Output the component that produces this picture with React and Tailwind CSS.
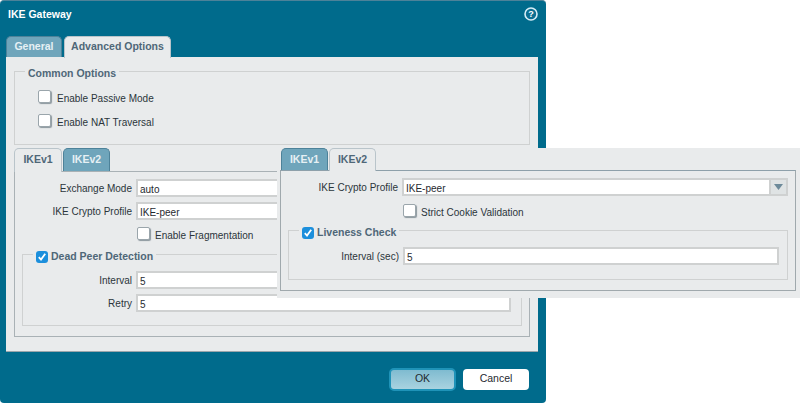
import React from 'react';

const font = { fontFamily: '"Liberation Sans", Arial, sans-serif' };

function Tab({ label, active, width }) {
  return (
    <div
      className={`flex items-center justify-center rounded-t-[5px] border border-b-0 text-[10.5px] font-bold ${width} ${
        active
          ? 'relative z-10 -mb-px border-[#b9c4ca] bg-[#e9ebec] pb-px text-[#4f6778]'
          : 'border-[#4d8299] bg-[#6fa5bb] text-[#e6f0f4]'
      }`}
    >
      {label}
    </div>
  );
}

function CheckBox({ checked }) {
  if (checked) {
    return (
      <span className="flex h-[12px] w-[12px] shrink-0 items-center justify-center rounded-[3px] bg-[#1c8fdc]">
        <svg width="10" height="10" viewBox="0 0 10 10">
          <path d="M1.8 5.2 L4 7.6 L8.2 1.8" fill="none" stroke="#fff" strokeWidth="1.8" />
        </svg>
      </span>
    );
  }
  return (
    <span className="h-[13px] w-[13px] shrink-0 rounded-[2px] border border-[#9aa5ab] bg-white shadow-[1px_1px_1px_#8b979e]" />
  );
}

function CheckRow({ label, gap, className = '' }) {
  return (
    <label className={`flex h-[13px] items-center text-[10px] text-[#2b353b] ${gap} ${className}`}>
      <CheckBox />
      <span className="pt-[3px]">{label}</span>
    </label>
  );
}

function Field({ label, value, labelWidth, inputWidth, arrow }) {
  return (
    <div className="flex items-center">
      <span className={`shrink-0 pr-[4px] pt-[1px] text-right text-[10px] text-[#2b353b] ${labelWidth}`}>{label}</span>
      <div className={`flex h-[18px] items-center border-2 border-[#cfd1d1] bg-white pl-[2px] text-[10px] text-[#1f2a30] ${inputWidth}`}>
        <span className="flex-1 pt-[2px]">{value}</span>
        {arrow && (
          <span className="-my-[2px] -mr-[2px] flex h-[18px] w-[19px] items-center justify-center border-2 border-[#cfd1d1] bg-[#dfe3e4]">
            <svg width="9" height="6" viewBox="0 0 9 6">
              <path d="M0 0 H9 L4.5 6 Z" fill="#6d8a9a" />
            </svg>
          </span>
        )}
      </div>
    </div>
  );
}

function Legend({ children }) {
  return <div className="absolute -top-[5px] left-[10px] flex h-[13px] items-center gap-[3px] bg-[#e9ebec] px-[3px] text-[10.5px] font-bold text-[#4f6778]">{children}</div>;
}

export default function App() {
  return (
    <div className="relative h-[404px] w-[800px] overflow-hidden bg-white" style={font}>
      <div className="flex h-[403px] w-[546px] flex-col rounded-[4px] border-t border-[#4d8299] bg-[#006b8c]">
        <div className="flex h-[35px] items-start justify-between pl-[8px] pr-[8px] pt-[6px]">
          <span className="text-[10.5px] font-bold text-white">IKE Gateway</span>
          <svg width="14" height="14" viewBox="0 0 14 14">
            <circle cx="7" cy="7" r="6" fill="#0b6f92" stroke="#d6edf6" strokeWidth="1.6" />
            <text x="7" y="10" textAnchor="middle" fontSize="9" fontWeight="700" fill="#fff" fontFamily="Liberation Sans">?</text>
          </svg>
        </div>

        <div className="flex h-[21px] gap-[2px] pl-[6px]">
          <Tab label="General" width="w-[56px]" />
          <Tab label="Advanced Options" active width="w-[107px]" />
        </div>

        <div className="ml-[6px] h-[294px] w-[532px] bg-[#e9ebec] px-[8px] pt-[14px] shadow-[0_1px_0_#9aa5ab]">
          <div className="relative h-[74px] border border-[#cfd1d1] pl-[23px] pt-[18px]">
            <Legend>Common Options</Legend>
            <div className="flex flex-col gap-[11px]">
              <CheckRow label="Enable Passive Mode" gap="gap-[6px]" />
              <CheckRow label="Enable NAT Traversal" gap="gap-[6px]" />
            </div>
          </div>

          <div className="mt-[3px] flex h-[23px] gap-[1px]">
            <Tab label="IKEv1" active width="w-[48px]" />
            <Tab label="IKEv2" width="w-[47px]" />
          </div>
          <div className="h-[166px] border border-[#a9b1b5] px-[7px] pt-[7px]">
            <div className="flex flex-col gap-[5px]">
              <Field label="Exchange Mode" value="auto" labelWidth="w-[114px]" inputWidth="w-[375px]" />
              <Field label="IKE Crypto Profile" value="IKE-peer" labelWidth="w-[114px]" inputWidth="w-[375px]" />
            </div>
            <CheckRow label="Enable Fragmentation" gap="gap-[5px]" className="mt-[7px] ml-[115px]" />
            <div className="relative mt-[14px] h-[72px] border border-[#cfd1d1] pt-[16px]">
              <Legend><CheckBox checked />Dead Peer Detection</Legend>
              <div className="flex flex-col gap-[5px]">
                <Field label="Interval" value="5" labelWidth="w-[113px]" inputWidth="w-[375px]" />
                <Field label="Retry" value="5" labelWidth="w-[113px]" inputWidth="w-[375px]" />
              </div>
            </div>
          </div>
        </div>

        <div className="flex flex-1 items-center justify-end gap-[7px] pr-[17px] pt-[4px] text-[10.5px] text-[#1f2a30]">
          <button className="h-[23px] w-[67px] rounded-[5px] border-2 border-[#1f93b8] bg-gradient-to-b from-[#7fbbd0] to-[#a9d3e0]">OK</button>
          <button className="h-[21px] w-[66px] rounded-[4px] bg-white">Cancel</button>
        </div>
      </div>

      {/* IKEv2 tab shown on top of the dialog */}
      <div className="absolute left-[277px] top-[148px] h-[150px] w-[523px] bg-[#e9ebec] pl-[3px] pr-[4px]">
        <div className="flex h-[22px] gap-[1px] pl-[1px]">
          <Tab label="IKEv1" width="w-[47px]" />
          <Tab label="IKEv2" active width="w-[47px]" />
        </div>
        <div className="h-[121px] border border-[#a0a9ad] border-t-[#8ea0aa] px-[7px] pt-[7px]">
          <Field label="IKE Crypto Profile" value="IKE-peer" labelWidth="w-[114px]" inputWidth="w-[386px]" arrow />
          <CheckRow label="Strict Cookie Validation" gap="gap-[5px]" className="mt-[8px] ml-[115px]" />
          <div className="relative mt-[13px] h-[50px] border border-[#cfd1d1] pt-[16px]">
            <Legend><CheckBox checked />Liveness Check</Legend>
            <Field label="Interval (sec)" value="5" labelWidth="w-[114px]" inputWidth="w-[376px]" />
          </div>
        </div>
      </div>
    </div>
  );
}
